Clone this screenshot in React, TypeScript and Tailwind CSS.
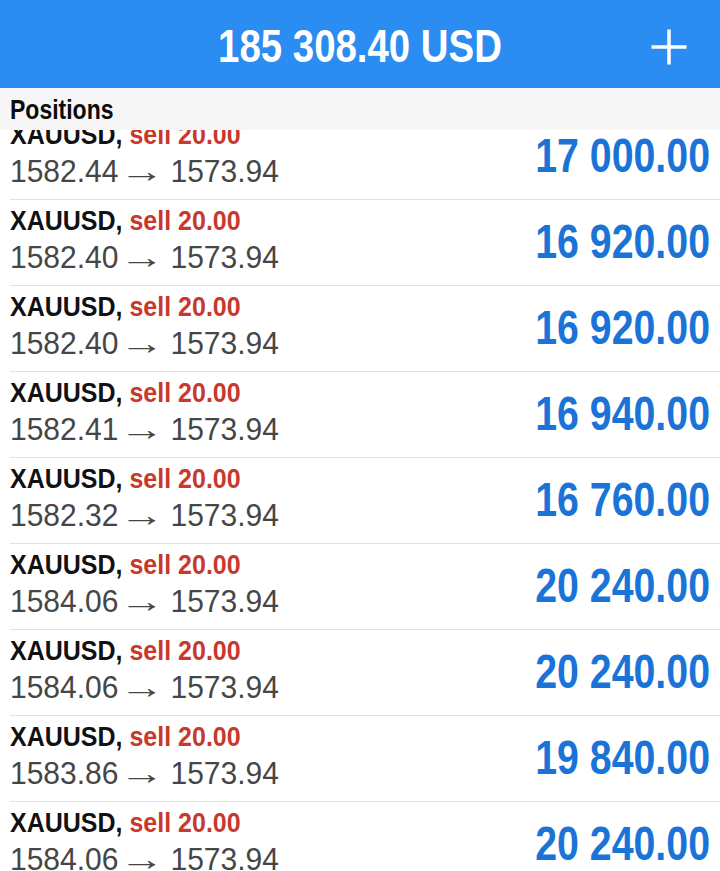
import React from "react";

type Position = {
  open: string;
  profit: string;
};

const positions: Position[] = [
  { open: "1582.44", profit: "17 000.00" },
  { open: "1582.40", profit: "16 920.00" },
  { open: "1582.40", profit: "16 920.00" },
  { open: "1582.41", profit: "16 940.00" },
  { open: "1582.32", profit: "16 760.00" },
  { open: "1584.06", profit: "20 240.00" },
  { open: "1584.06", profit: "20 240.00" },
  { open: "1583.86", profit: "19 840.00" },
  { open: "1584.06", profit: "20 240.00" },
];

function PlusIcon() {
  return (
    <svg width="36" height="36" viewBox="0 0 36 36" fill="none">
      <line x1="18" y1="0.5" x2="18" y2="35.5" stroke="white" strokeWidth="3.5" />
      <line x1="0.5" y1="18" x2="35.5" y2="18" stroke="white" strokeWidth="3.5" />
    </svg>
  );
}

function PositionRow({ item }: { item: Position }) {
  return (
    <div className="ml-[10px] flex h-[86px] items-center justify-between border-b border-[#e2e2e2] pr-[10px]">
      <div className="flex flex-col self-start">
        <span className="block h-[40px] scale-y-[1.12] text-[25px] leading-[40px] font-bold text-[#111111]">
          XAUUSD, <span className="text-[#c8392d]">sell 20.00</span>
        </span>
        <span className="block h-[33px] scale-y-[1.07] text-[30px] leading-[33px] whitespace-nowrap text-[#464646]">
          {item.open}
          <span className="inline-block w-[52px] pl-[1px] text-left">
            <span className="inline-block origin-left scale-x-[1.5]">→</span>
          </span>
          1573.94
        </span>
      </div>
      <span className="mb-[4px] block scale-y-[1.24] text-[39.3px] leading-[44px] font-bold text-[#1a74d8]">
        {item.profit}
      </span>
    </div>
  );
}

export default function App() {
  return (
    <div className="flex h-[871px] w-full flex-col overflow-hidden bg-white font-['Liberation_Sans',Arial,sans-serif]">
      <header className="grid h-[88px] shrink-0 grid-cols-[1fr_auto_1fr] items-center bg-[#2b8cf1] pt-[4px]">
        <div />
        <h1 className="block scale-y-[1.2] text-[38.4px] leading-[44px] font-bold text-white">
          185 308.40 USD
        </h1>
        <div className="flex justify-end pr-[33px] pt-[1px]">
          <PlusIcon />
        </div>
      </header>

      <div className="flex h-[42px] shrink-0 items-center bg-[#f6f6f6] px-[10px]">
        <span className="block scale-y-[1.21] text-[23px] leading-[30px] font-bold text-[#0c0c0c]">
          Positions
        </span>
      </div>

      <div className="flex-1 overflow-hidden">
        <div className="-mt-[16px]">
          {positions.map((p, i) => (
            <PositionRow key={i} item={p} />
          ))}
        </div>
      </div>
    </div>
  );
}
